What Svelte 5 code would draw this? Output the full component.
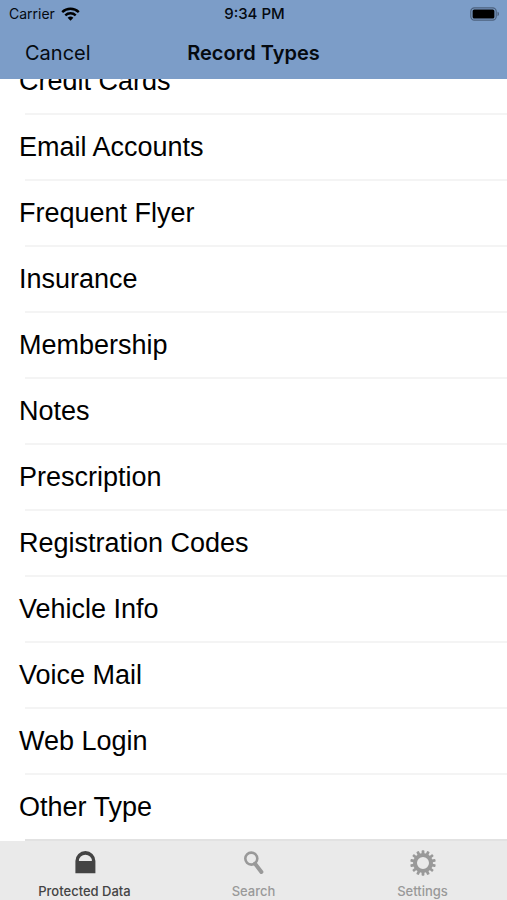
<script>
  const recordTypes = [
      'Credit Cards',
      'Email Accounts',
      'Frequent Flyer',
      'Insurance',
      'Membership',
      'Notes',
      'Prescription',
      'Registration Codes',
      'Vehicle Info',
      'Voice Mail',
      'Web Login',
      'Other Type',
  ];

  const tabs = [
      { id: 'data', label: 'Protected Data' },
      { id: 'search', label: 'Search' },
      { id: 'settings', label: 'Settings' },
  ];

  const teeth = Array.from({ length: 14 }, (_, i) => (i * 360) / 14);

  let activeTab = 'data';
</script>

<style>
  :global(body) {
      margin: 0;
      background: #fff;
  }

  .screen {
      display: flex;
      flex-direction: column;
      height: 100vh;
      font-family: Inter, "Liberation Sans", sans-serif;
      color: #050a10;
  }

  button {
      border: none;
      background: none;
      padding: 0;
      font: inherit;
      color: inherit;
      cursor: pointer;
  }

  .top {
      flex: none;
      background: #7c9dc8;
  }

  .status-bar,
  .nav-bar {
      display: grid;
      grid-template-columns: 1fr auto 1fr;
      align-items: center;
  }

  .status-bar {
      height: 27px;
      padding: 0 7px 0 9px;
      font-size: 14px;
  }

  .carrier {
      display: flex;
      align-items: center;
      gap: 6px;
  }

  .time {
      font-size: 15px;
      font-weight: 500;
  }

  .battery {
      justify-self: end;
  }

  .status-bar svg {
      display: block;
  }

  .nav-bar {
      height: 52px;
      padding: 0 25px;
      font-size: 20px;
  }

  .nav-bar button {
      justify-self: start;
  }

  h1 {
      margin: 0;
      font-size: 20px;
      font-weight: 600;
  }

  /* column-reverse keeps the list scrolled to its last row */
  .list {
      flex: 1;
      min-height: 0;
      display: flex;
      flex-direction: column-reverse;
      overflow-y: auto;
      scrollbar-width: none;
  }

  ul {
      flex: none;
      list-style: none;
      margin: 0;
      padding: 0;
  }

  li {
      display: flex;
      height: 66px;
      background: linear-gradient(#f4f4f4, #f4f4f4) 25px 100% / 100% 2px no-repeat;
  }

  li:last-child {
      background-image: linear-gradient(#e2e2e2, #e2e2e2);
  }

  .row {
      flex: 1;
      padding: 0 19px 2px;
      text-align: left;
      font-family: "Liberation Sans", Arial, sans-serif;
      font-size: 27px;
      color: #000;
  }

  .tab-bar {
      flex: none;
      display: grid;
      grid-template-columns: repeat(3, 1fr);
      height: 59px;
      background: #eaeaea;
  }

  .tab {
      display: flex;
      flex-direction: column;
      align-items: center;
      justify-content: flex-end;
      gap: 7px;
      padding-bottom: 1px;
      font-size: 13px;
      line-height: 16px;
      font-weight: 500;
      color: #999;
  }

  .tab.active {
      color: #444;
  }
</style>

<div class="screen">
  <header class="top">
      <div class="status-bar">
          <div class="carrier">
              <span>Carrier</span>
              <svg width="19" height="14" viewBox="0 0 19 14" aria-hidden="true">
                  <g fill="none" stroke="#000" stroke-width="2.4">
                      <path d="M1.2 5.2a11.8 11.8 0 0 1 16.6 0" />
                      <path d="M4.3 8.4a7.4 7.4 0 0 1 10.4 0" />
                  </g>
                  <path d="M9.5 13.8 6.6 10.8a4.2 4.2 0 0 1 5.8 0z" fill="#000" />
              </svg>
          </div>
          <span class="time">9:34 PM</span>
          <svg class="battery" width="30" height="14" viewBox="0 0 30 14" aria-hidden="true">
              <rect x="0.8" y="0.8" width="25.4" height="12.4" rx="3.6" fill="none" stroke="#4c617e" stroke-width="1.2" />
              <rect x="2.6" y="2.5" width="21.8" height="9" rx="1.6" fill="#000" />
              <path d="M27.5 4.8c2 .6 2 3.8 0 4.4z" fill="#4c617e" />
          </svg>
      </div>
      <nav class="nav-bar">
          <button type="button">Cancel</button>
          <h1>Record Types</h1>
      </nav>
  </header>

  <main class="list">
      <ul>
          {#each recordTypes as type}
              <li><button type="button" class="row">{type}</button></li>
          {/each}
      </ul>
  </main>

  <nav class="tab-bar">
      {#each tabs as tab}
          <button
              type="button"
              class="tab"
              class:active={activeTab === tab.id}
              on:click={() => (activeTab = tab.id)}
          >
              <svg width="26" height="26" viewBox="0 0 26 26" aria-hidden="true">
                  {#if tab.id === 'data'}
                      <path
                          d="M3.4 23.2V11a10 10 0 0 1 20 0v12.2zM6.9 11h13a6.5 6.3 0 0 0-13 0z"
                          fill="currentColor"
                          fill-rule="evenodd"
                      />
                  {:else if tab.id === 'search'}
                      <circle cx="10.3" cy="8.6" r="6" fill="none" stroke="currentColor" stroke-width="2.6" />
                      <path d="M14 13.6 20.4 22" stroke="currentColor" stroke-width="4" stroke-linecap="round" />
                  {:else}
                      <circle cx="13" cy="13" r="8" fill="none" stroke="currentColor" stroke-width="4" />
                      {#each teeth as angle}
                          <rect
                              x="11.6"
                              y="0.2"
                              width="2.8"
                              height="4"
                              rx="0.8"
                              fill="currentColor"
                              transform="rotate({angle} 13 13)"
                          />
                      {/each}
                  {/if}
              </svg>
              <span>{tab.label}</span>
          </button>
      {/each}
  </nav>
</div>
